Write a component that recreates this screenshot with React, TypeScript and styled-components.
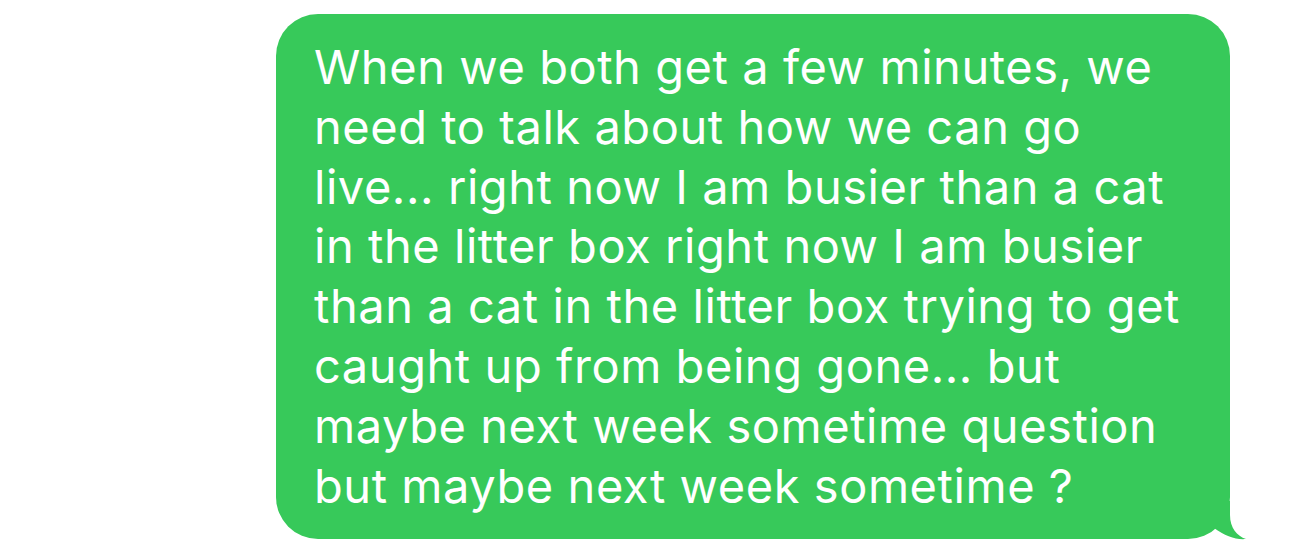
import styled, { createGlobalStyle } from "styled-components";

const GlobalStyle = createGlobalStyle`
  html, body {
    margin: 0;
    padding: 0;
    background: #ffffff;
  }
  body {
    font-family: Inter, "Noto Sans", "Liberation Sans", sans-serif;
  }
`;

const LINES = [
  "When we both get a few minutes, we",
  "need to talk about how we can go",
  "live... right now I am busier than a cat",
  "in the litter box right now I am busier",
  "than a cat in the litter box trying to get",
  "caught up from being gone... but",
  "maybe next week sometime question",
  "but maybe next week sometime ?",
];

export default function App() {
  return (
    <>
      <GlobalStyle />
      <Screen>
        <Row>
          <Bubble>
            {LINES.map((line) => (
              <Line key={line}>{line}</Line>
            ))}
            <Tail viewBox="0 0 43 39" aria-hidden>
              <path d="M25 0 L25 14 C25 27 32 35 41 38 C31 39 20 35 9 27 L0 27 L0 0 Z" />
            </Tail>
          </Bubble>
        </Row>
      </Screen>
    </>
  );
}

const Screen = styled.main`
  width: 1290px;
  height: 553px;
  background: #ffffff;
  overflow: hidden;
`;

const Row = styled.div`
  display: flex;
  justify-content: flex-end;
  padding: 14px 60px 0 0;
`;

const Bubble = styled.div`
  position: relative;
  width: 954px;
  box-sizing: border-box;
  padding: 23px 20px 24px 38px;
  background: #37c95a;
  border-radius: 42px;
  color: #ffffff;
  font-size: 47px;
  line-height: 59.8px;
  letter-spacing: 0.55px;
`;

const Line = styled.div`
  white-space: nowrap;
`;

const Tail = styled.svg`
  position: absolute;
  right: -18px;
  bottom: -1px;
  width: 43px;
  height: 39px;
  fill: #37c95a;
`;
